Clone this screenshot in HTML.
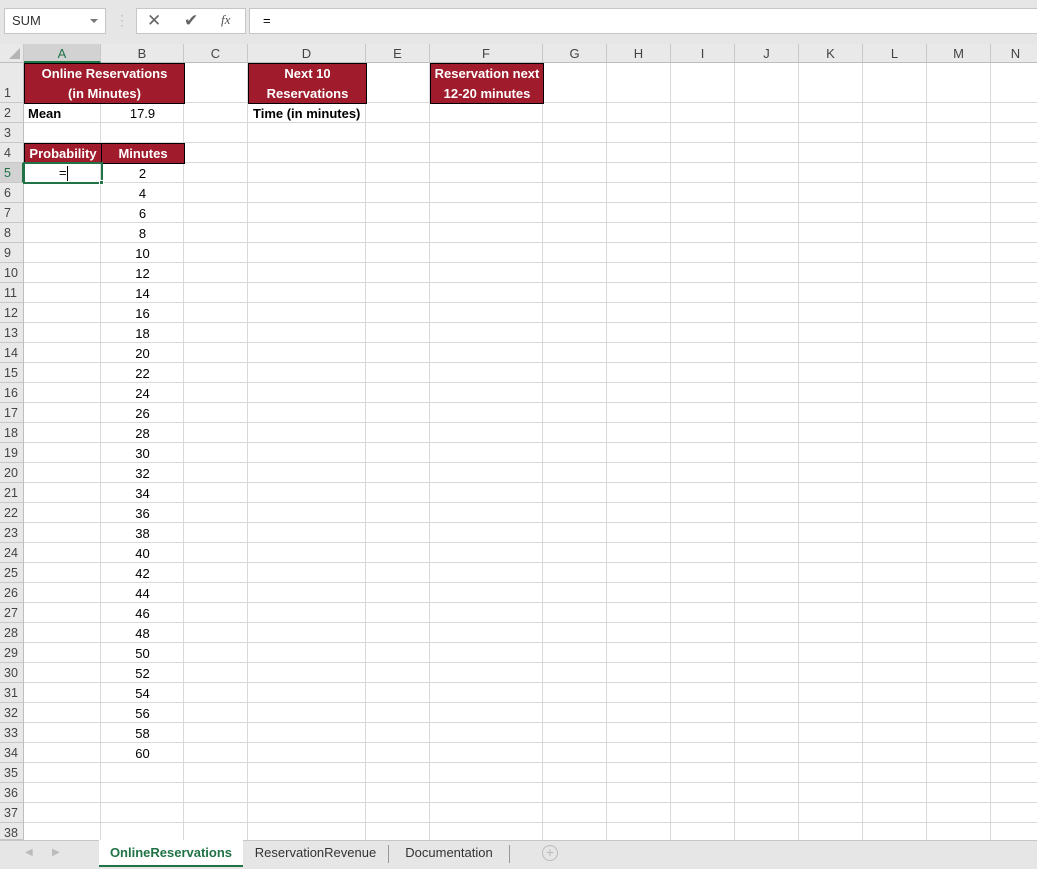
<!DOCTYPE html>
<html><head><meta charset="utf-8"><style>
*{margin:0;padding:0;box-sizing:border-box}
body{width:1037px;height:869px;overflow:hidden;background:#fff;font-family:"Liberation Sans",sans-serif;position:relative}
.a{position:absolute}
.top{left:0;top:0;width:1037px;height:44px;background:#e6e6e6}
.box{background:#fff;border:1px solid #c6c6c6}
.colh{top:44px;height:19px;background:#e9e9e9;border-right:1px solid #c8c8c8;border-bottom:1px solid #bdbdbd;font-size:13px;color:#444;text-align:center;line-height:19px}
.rowh{left:0;width:24px;background:#e9e9e9;border-right:1px solid #bdbdbd;border-bottom:1px solid #c8c8c8;font-size:12.5px;color:#444;padding-left:4px}
.vl{top:63px;width:1px;height:777px;background:#d9d9d9}
.t{font-size:13px;color:#000;text-align:center;white-space:nowrap}
.m{background:#a01c2c;color:#fff;font-weight:bold;border:1px solid #000;font-size:13px;text-align:center;line-height:20px}
</style></head><body>
<div class="a top"></div>
<div class="a box" style="left:4px;top:8px;width:102px;height:26px;font-size:13px;line-height:24px;padding-left:7px;color:#333">SUM</div>
<div class="a" style="left:90px;top:19px;width:0;height:0;border-left:4px solid transparent;border-right:4px solid transparent;border-top:4px solid #777"></div>
<div class="a" style="left:120px;top:13px;color:#aaa;font-size:12px;line-height:5px">·<br>·<br>·</div>
<div class="a box" style="left:136px;top:8px;width:110px;height:26px"></div>
<div class="a" style="left:147px;top:11px;font-size:17px;color:#666">✕</div>
<div class="a" style="left:184px;top:11px;font-size:17px;color:#666">✔</div>
<div class="a" style="left:221px;top:12px;font-size:13px;font-style:italic;font-family:'Liberation Serif',serif;color:#555">fx</div>
<div class="a box" style="left:249px;top:8px;width:790px;height:26px;font-size:13px;line-height:24px;padding-left:13px">=</div>

<div class="a" style="left:0;top:63px;width:1037px;height:777px;background:repeating-linear-gradient(to bottom,transparent 0,transparent 39px,#d9d9d9 39px,#d9d9d9 40px) 0 0/100% 40px no-repeat,repeating-linear-gradient(to bottom,transparent 0,transparent 19px,#d9d9d9 19px,#d9d9d9 20px) 0 40px/100% 737px no-repeat"></div>
<div class="a vl" style="left:100px"></div><div class="a vl" style="left:183px"></div><div class="a vl" style="left:247px"></div><div class="a vl" style="left:365px"></div><div class="a vl" style="left:429px"></div><div class="a vl" style="left:542px"></div><div class="a vl" style="left:606px"></div><div class="a vl" style="left:670px"></div><div class="a vl" style="left:734px"></div><div class="a vl" style="left:798px"></div><div class="a vl" style="left:862px"></div><div class="a vl" style="left:926px"></div><div class="a vl" style="left:990px"></div>

<div class="a colh" style="left:0;width:24px"><div style="position:absolute;right:3px;bottom:3px;width:0;height:0;border-left:11px solid transparent;border-bottom:11px solid #b5b5b5"></div></div>
<div class="a colh" style="left:24px;width:77px;background:#d2d2d2;border-bottom:2px solid #217346;color:#217346">A</div>
<div class="a colh" style="left:101px;width:83px">B</div>
<div class="a colh" style="left:184px;width:64px">C</div>
<div class="a colh" style="left:248px;width:118px">D</div>
<div class="a colh" style="left:366px;width:64px">E</div>
<div class="a colh" style="left:430px;width:113px">F</div>
<div class="a colh" style="left:543px;width:64px">G</div>
<div class="a colh" style="left:607px;width:64px">H</div>
<div class="a colh" style="left:671px;width:64px">I</div>
<div class="a colh" style="left:735px;width:64px">J</div>
<div class="a colh" style="left:799px;width:64px">K</div>
<div class="a colh" style="left:863px;width:64px">L</div>
<div class="a colh" style="left:927px;width:64px">M</div>
<div class="a colh" style="left:991px;width:50px">N</div>

<div class="a rowh" style="top:63px;height:40px;line-height:60px">1</div>
<div class="a rowh" style="top:103px;height:20px;line-height:21px">2</div>
<div class="a rowh" style="top:123px;height:20px;line-height:21px">3</div>
<div class="a rowh" style="top:143px;height:20px;line-height:21px">4</div>
<div class="a rowh" style="top:163px;height:20px;line-height:21px;background:#d2d2d2;color:#217346;border-right:2px solid #217346">5</div>
<div class="a rowh" style="top:183px;height:20px;line-height:21px">6</div>
<div class="a rowh" style="top:203px;height:20px;line-height:21px">7</div>
<div class="a rowh" style="top:223px;height:20px;line-height:21px">8</div>
<div class="a rowh" style="top:243px;height:20px;line-height:21px">9</div>
<div class="a rowh" style="top:263px;height:20px;line-height:21px">10</div>
<div class="a rowh" style="top:283px;height:20px;line-height:21px">11</div>
<div class="a rowh" style="top:303px;height:20px;line-height:21px">12</div>
<div class="a rowh" style="top:323px;height:20px;line-height:21px">13</div>
<div class="a rowh" style="top:343px;height:20px;line-height:21px">14</div>
<div class="a rowh" style="top:363px;height:20px;line-height:21px">15</div>
<div class="a rowh" style="top:383px;height:20px;line-height:21px">16</div>
<div class="a rowh" style="top:403px;height:20px;line-height:21px">17</div>
<div class="a rowh" style="top:423px;height:20px;line-height:21px">18</div>
<div class="a rowh" style="top:443px;height:20px;line-height:21px">19</div>
<div class="a rowh" style="top:463px;height:20px;line-height:21px">20</div>
<div class="a rowh" style="top:483px;height:20px;line-height:21px">21</div>
<div class="a rowh" style="top:503px;height:20px;line-height:21px">22</div>
<div class="a rowh" style="top:523px;height:20px;line-height:21px">23</div>
<div class="a rowh" style="top:543px;height:20px;line-height:21px">24</div>
<div class="a rowh" style="top:563px;height:20px;line-height:21px">25</div>
<div class="a rowh" style="top:583px;height:20px;line-height:21px">26</div>
<div class="a rowh" style="top:603px;height:20px;line-height:21px">27</div>
<div class="a rowh" style="top:623px;height:20px;line-height:21px">28</div>
<div class="a rowh" style="top:643px;height:20px;line-height:21px">29</div>
<div class="a rowh" style="top:663px;height:20px;line-height:21px">30</div>
<div class="a rowh" style="top:683px;height:20px;line-height:21px">31</div>
<div class="a rowh" style="top:703px;height:20px;line-height:21px">32</div>
<div class="a rowh" style="top:723px;height:20px;line-height:21px">33</div>
<div class="a rowh" style="top:743px;height:20px;line-height:21px">34</div>
<div class="a rowh" style="top:763px;height:20px;line-height:21px">35</div>
<div class="a rowh" style="top:783px;height:20px;line-height:21px">36</div>
<div class="a rowh" style="top:803px;height:20px;line-height:21px">37</div>
<div class="a rowh" style="top:823px;height:17px;line-height:21px;overflow:hidden">38</div>

<div class="a m" style="left:24px;top:63px;width:161px;height:41px;padding-top:0">Online Reservations<br>(in Minutes)</div>
<div class="a m" style="left:248px;top:63px;width:119px;height:41px">Next 10<br>Reservations</div>
<div class="a m" style="left:430px;top:63px;width:114px;height:41px">Reservation next<br>12-20 minutes</div>
<div class="a m" style="left:24px;top:143px;width:78px;height:21px;line-height:19px">Probability</div>
<div class="a m" style="left:101px;top:143px;width:84px;height:21px;line-height:19px">Minutes</div>

<div class="a t" style="left:28px;top:106px;font-weight:bold">Mean</div>
<div class="a t" style="left:101px;top:106px;width:83px">17.9</div>
<div class="a t" style="left:253px;top:106px;font-weight:bold">Time (in minutes)</div>

<div class="a" style="left:23px;top:162px;width:80px;height:22px;border:2px solid #217346"></div>
<div class="a" style="left:99px;top:180px;width:5px;height:5px;background:#217346;border:1px solid #fff"></div>
<div class="a t" style="left:59px;top:165px">=</div>
<div class="a" style="left:67px;top:166px;width:1px;height:15px;background:#000"></div>

<div class="a t" style="left:101px;top:164px;width:83px;line-height:20px">2<br>4<br>6<br>8<br>10<br>12<br>14<br>16<br>18<br>20<br>22<br>24<br>26<br>28<br>30<br>32<br>34<br>36<br>38<br>40<br>42<br>44<br>46<br>48<br>50<br>52<br>54<br>56<br>58<br>60</div>

<div class="a" style="left:0;top:840px;width:1037px;height:29px;background:#e6e6e6;border-top:1px solid #c6c6c6"></div>
<div class="a" style="left:25px;top:847px;color:#bbb;font-size:10px">◀</div>
<div class="a" style="left:52px;top:847px;color:#bbb;font-size:10px">▶</div>
<div class="a" style="left:99px;top:840px;width:144px;height:27px;background:#fff;border-bottom:2px solid #217346;color:#217346;font-weight:bold;font-size:13px;text-align:center;line-height:26px">OnlineReservations</div>
<div class="a" style="left:243px;top:840px;width:145px;height:27px;font-size:13px;color:#333;text-align:center;line-height:26px">ReservationRevenue</div>
<div class="a" style="left:388px;top:845px;width:1px;height:18px;background:#999"></div>
<div class="a" style="left:389px;top:840px;width:120px;height:27px;font-size:13px;color:#333;text-align:center;line-height:26px">Documentation</div>
<div class="a" style="left:509px;top:845px;width:1px;height:18px;background:#999"></div>
<div class="a" style="left:542px;top:845px;width:16px;height:16px;border:1px solid #bbb;border-radius:50%;color:#bbb;font-size:14px;line-height:13px;text-align:center">+</div>
</body></html>
